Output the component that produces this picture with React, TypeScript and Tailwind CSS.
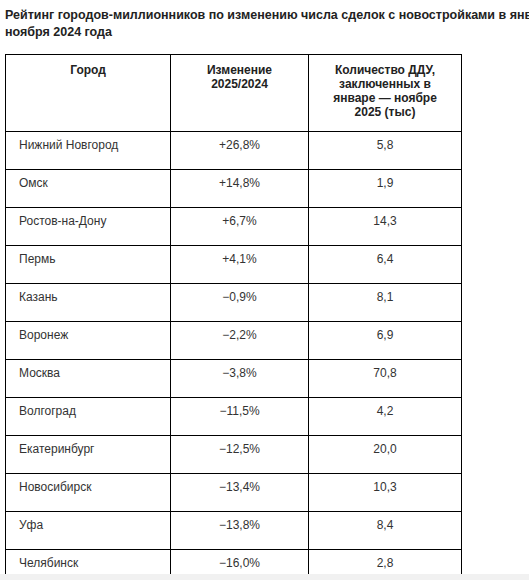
const ROWS: [string, string, string][] = [
  ['Нижний Новгород', '+26,8%', '5,8'],
  ['Омск', '+14,8%', '1,9'],
  ['Ростов-на-Дону', '+6,7%', '14,3'],
  ['Пермь', '+4,1%', '6,4'],
  ['Казань', '−0,9%', '8,1'],
  ['Воронеж', '−2,2%', '6,9'],
  ['Москва', '−3,8%', '70,8'],
  ['Волгоград', '−11,5%', '4,2'],
  ['Екатеринбург', '−12,5%', '20,0'],
  ['Новосибирск', '−13,4%', '10,3'],
  ['Уфа', '−13,8%', '8,4'],
  ['Челябинск', '−16,0%', '2,8'],
];

export default function App() {
  return (
    <div className="w-[529px] h-[580px] overflow-hidden bg-white font-['Liberation_Sans',Arial,sans-serif] flex flex-col">
      <div className="h-[574px] overflow-hidden">
        {/* Title */}
        <h1 className="pl-[5px] pt-[7px] text-[12.5px] leading-[17px] font-bold text-[#222] whitespace-nowrap">
          Рейтинг городов-миллионников по изменению числа сделок с новостройками в январе —
          <br />
          ноября 2024 года
        </h1>

        {/* Table */}
        <table className="mt-[13px] ml-[5px] w-[456px] border-collapse table-fixed text-[12px] text-[#333]">
          <colgroup>
            <col className="w-[165px]" />
            <col className="w-[138px]" />
            <col className="w-[153px]" />
          </colgroup>
          <thead>
            <tr className="h-[77px]">
              <th className="border border-black align-top pt-[8px] px-3 font-bold text-[#222] leading-[14px]">
                Город
              </th>
              <th className="border border-black align-top pt-[8px] px-3 font-bold text-[#222] leading-[14px]">
                Изменение
                <br />
                2025/2024
              </th>
              <th className="border border-black align-top pt-[8px] px-6 font-bold text-[#222] leading-[14px]">
                Количество ДДУ, заключенных в январе — ноябре 2025 (тыс)
              </th>
            </tr>
          </thead>
          <tbody>
            {ROWS.map(([city, change, count]) => (
              <tr key={city} className="h-[38px]">
                <td className="border border-black align-top pt-[6px] pl-[13px] leading-[14px]">{city}</td>
                <td className="border border-black align-top pt-[6px] text-center leading-[14px]">{change}</td>
                <td className="border border-black align-top pt-[6px] text-center leading-[14px]">{count}</td>
              </tr>
            ))}
          </tbody>
        </table>
      </div>
      <div className="flex-1 bg-[#f1f1f1]" />
    </div>
  );
}
